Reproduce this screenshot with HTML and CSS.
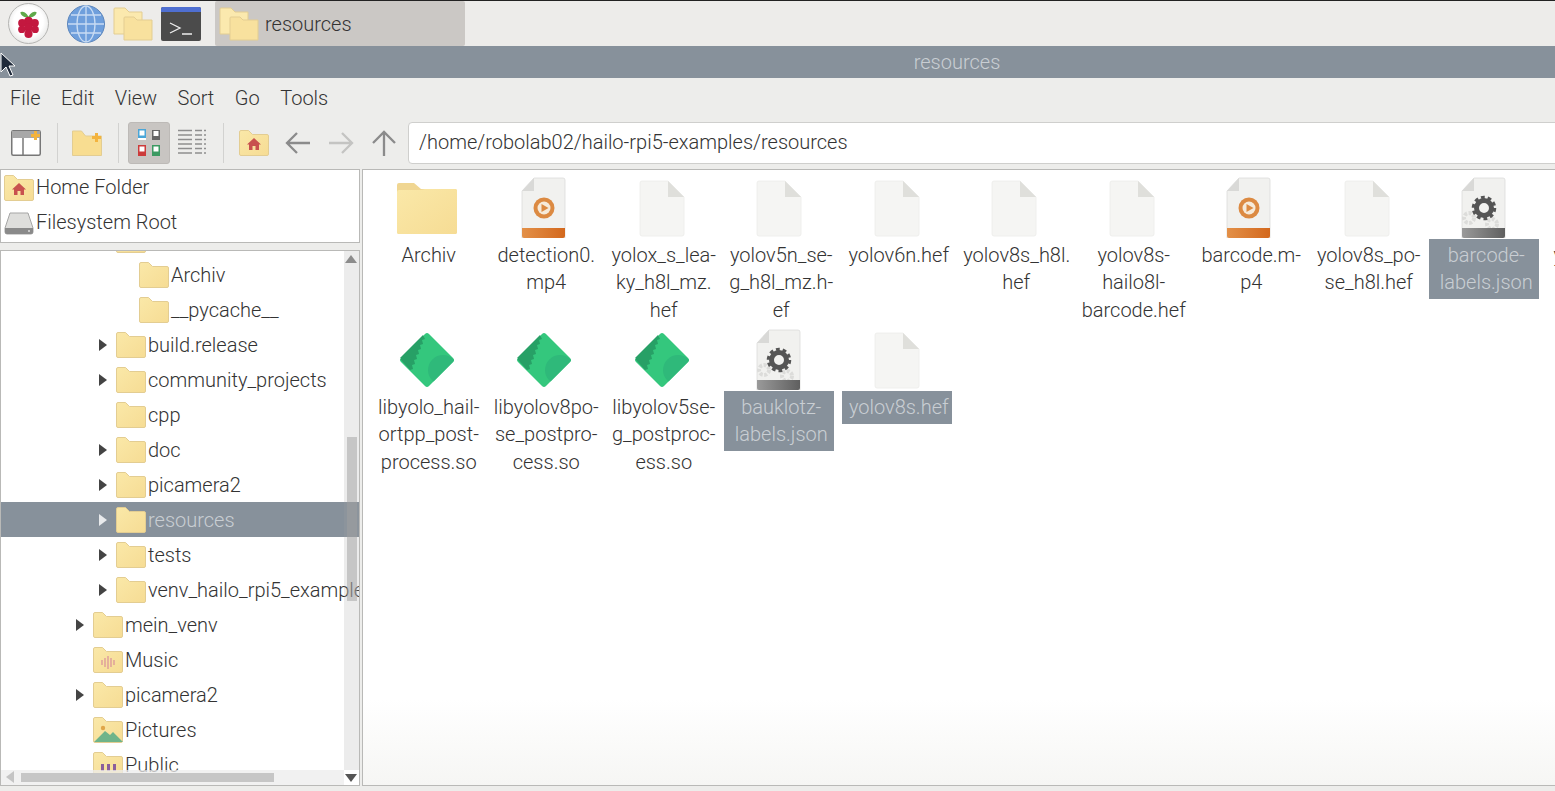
FILE: index.html
```html
<!DOCTYPE html>
<html lang="en">
<head>
<meta charset="utf-8">
<title>resources</title>
<link rel="stylesheet" href="styles.css">
</head>
<body>
<svg class="defs" width="0" height="0" aria-hidden="true">
  <defs>
    <linearGradient id="fg" x1="0" y1="0" x2="1" y2="1"><stop offset="0" stop-color="#fae8a8"/><stop offset="1" stop-color="#f6dc94"/></linearGradient>
    <linearGradient id="band" x1="0" y1="0" x2="1" y2="0"><stop offset="0" stop-color="#e39048"/><stop offset="1" stop-color="#d3681d"/></linearGradient>
    <linearGradient id="gband" x1="0" y1="0" x2="1" y2="0"><stop offset="0" stop-color="#9a9a9a"/><stop offset="1" stop-color="#5f5f5f"/></linearGradient>
    <clipPath id="dia"><path d="M28 8q2-2 4 0l24 24q2 2 0 4L32 60q-2 2-4 0L4 36q-2-2 0-4Z"/></clipPath>
    <symbol id="folder" viewBox="0 0 30 26">
      <path d="M.5 2q0-1.500 1.500-1.500h7.500l4 4H28q1.500 0 1.500 1.500V24q0 1.500-1.500 1.500H2Q.5 25.500.5 24Z" fill="url(#fg)" stroke="#e3cd92"/>
    </symbol>
    <symbol id="bigfolder" viewBox="0 0 64 64">
      <path d="M0 11q0-2 2-2h15l7 6h34q2 0 2 2v41q0 2-2 2H2q-2 0-2-2Z" fill="#f0d692"/>
      <path d="M0 18q0-2 2-2h22l4-1h30q2 0 2 2v41q0 2-2 2H2q-2 0-2-2Z" fill="url(#fg)"/>
    </symbol>
    <symbol id="blank" viewBox="0 0 64 64">
      <path d="M8 9q0-2 2-2h26l16 16v37q0 2-2 2H10q-2 0-2-2Z" fill="#f5f5f3" stroke="#ececea" stroke-width=".8"/>
      <path d="M36 7l16 16H36Z" fill="#dfdfdb"/>
    </symbol>
    <symbol id="video" viewBox="0 0 64 64">
      <path d="M8 17 20 4h29q2 0 2 2v58H8Z" fill="#f1f1ef" stroke="#dcdcda" stroke-width=".8"/>
      <path d="M8 17 20 4v13Z" fill="#d9d9d7"/>
      <path d="M8 54h43v8q0 2-2 2H10q-2 0-2-2Z" fill="url(#band)"/>
      <circle cx="30" cy="34" r="10.500" fill="#dc8a42"/>
      <circle cx="30" cy="34" r="6.500" fill="#f6ead9"/>
      <path d="M27.500 30l7 4-7 4Z" fill="#dc8a42"/>
    </symbol>
    <symbol id="gearfile" viewBox="0 0 64 64">
      <path d="M8 17 20 4h29q2 0 2 2v58H8Z" fill="#f1f1ef" stroke="#dcdcda" stroke-width=".8"/>
      <path d="M8 17 20 4v13Z" fill="#d9d9d7"/>
      <circle cx="15" cy="44" r="5" fill="none" stroke="#dcdcda" stroke-width="4" stroke-dasharray="3 1.500"/>
      <circle cx="38" cy="50" r="5" fill="none" stroke="#dcdcda" stroke-width="4" stroke-dasharray="3 1.500"/>
      <circle cx="30" cy="34" r="7.500" fill="none" stroke="#555" stroke-width="5"/>
      <circle cx="30" cy="34" r="10.500" fill="none" stroke="#555" stroke-width="3.500" stroke-dasharray="3.700 2.900"/>
      <path d="M8 54h43v8q0 2-2 2H10q-2 0-2-2Z" fill="url(#gband)"/>
    </symbol>
    <symbol id="lib" viewBox="0 0 64 64">
      <path d="M28 8q2-2 4 0l24 24q2 2 0 4L32 60q-2 2-4 0L4 36q-2-2 0-4Z" fill="#34c77d"/>
      <circle cx="46" cy="44" r="15" fill="#2fb97a" clip-path="url(#dia)"/>
      <path d="M3 32 26 9l2 4-3 1 1 4-3 1 1 4-3 1 1 4-3 1 1 4-3 1 1 4-3 1 1 4-3 1-9-10q-1-1 0-2Z" fill="#27a066"/>
    </symbol>
    <symbol id="homefolder" viewBox="0 0 30 26">
      <use href="#folder" width="30" height="26"/>
      <path d="M15 8l7 6.500h-2V20h-3.500v-4h-3v4H10v-5.500H8Z" fill="#c8514e"/>
    </symbol>
  </defs>
</svg>

<div class="screen">
  <header class="panel">
    <span class="app-pi">
      <svg width="27" height="32" viewBox="0 0 30 32"><path d="M15 8C12 2 7 2 6 3c0 3 4 6 9 6 5 0 9-3 9-6-1-1-6-1-9 5Z" fill="#5fa94a"/><circle cx="15" cy="13" r="5" fill="#c3183f"/><circle cx="8" cy="15" r="4.500" fill="#c3183f"/><circle cx="22" cy="15" r="4.500" fill="#c3183f"/><circle cx="15" cy="20" r="5" fill="#c3183f"/><circle cx="7.500" cy="22" r="4" fill="#c3183f"/><circle cx="22.500" cy="22" r="4" fill="#c3183f"/><circle cx="15" cy="27" r="4.500" fill="#c3183f"/></svg>
    </span>
    <svg class="app-globe" width="38" height="38" viewBox="0 0 38 38"><circle cx="19" cy="19" r="18.500" fill="#6f9fdc" stroke="#5b85bb"/><g fill="none" stroke="#c9dcf3" stroke-width="1.300"><ellipse cx="19" cy="19" rx="9" ry="18"/><path d="M19 1v36M1 19h36M4 10h30M4 28h30"/></g></svg>
    <svg class="app-folders" width="40" height="34" viewBox="0 0 40 34"><path d="M1 2q0-1 1-1h10l4 4h13v22H1Z" fill="#fbe9ae" stroke="#e3cd92"/><path d="M11 11q0-1 1-1h9l3 3h15v20H11Z" fill="#f8e19e" stroke="#e3cd92"/></svg>
    <svg class="app-term" width="40" height="34" viewBox="0 0 40 34"><rect width="40" height="34" rx="2" fill="#4b4b4b"/><path d="M0 2q0-2 2-2h36q2 0 2 2v3H0Z" fill="#4f6fd1"/><path d="M9 16l10 5-10 5M21 27h10" fill="none" stroke="#eee" stroke-width="1.300"/></svg>
    <div class="task">
      <svg width="40" height="34" viewBox="0 0 40 34"><path d="M1 2q0-1 1-1h10l4 4h13v22H1Z" fill="#fbe9ae" stroke="#e3cd92"/><path d="M11 11q0-1 1-1h9l3 3h15v20H11Z" fill="#f8e19e" stroke="#e3cd92"/></svg>
      <span>resources</span>
    </div>
  </header>

  <div class="titlebar">resources</div>

  <nav class="menubar">
    <span>File</span><span>Edit</span><span>View</span><span>Sort</span><span>Go</span><span>Tools</span>
  </nav>

  <div class="toolbar">
    <svg class="tb-window" width="30" height="26" viewBox="0 0 30 26"><rect x=".75" y=".75" width="28.500" height="24.500" rx="1.500" fill="#fff" stroke="#777" stroke-width="1.500"/><path d="M1 1h28v7H1Z" fill="#a8a8a8"/><path d="M12 8v17" stroke="#777" stroke-width="1.500"/><path d="M23 1h3v3h3v3h-3v3h-3V7h-3V4h3Z" fill="#f3b33e"/></svg>
    <i class="sep"></i>
    <svg class="tb-new" width="30" height="26" viewBox="0 0 30 26"><path d="M.5 1h9l4 5H29.500v19.500H.5Z" fill="#f8dd91" stroke="#e3cd92"/><path d="M23 3h3v3h3v3h-3v3h-3V9h-3V6h3Z" fill="#f3b33e"/></svg>
    <i class="sep"></i>
    <span class="tb-view">
      <svg width="22" height="28" viewBox="0 0 22 28"><rect width="8" height="11" fill="#fff"/><rect width="8" height="9" fill="#4aa6d8"/><rect x="1.500" y="1.500" width="5" height="5" fill="#fff"/><rect x="14" y="1" width="8" height="10" fill="#666"/><rect x="15.500" y="2" width="5" height="5" fill="#fff"/><rect y="16" width="8" height="11" fill="#cc3b3b"/><rect x="1.500" y="17.500" width="5" height="5" fill="#fff"/><rect x="14" y="16" width="8" height="11" fill="#3c9a62"/><rect x="15.500" y="17.500" width="5" height="5" fill="#fff"/></svg>
    </span>
    <svg class="tb-list" width="29" height="28" viewBox="0 0 29 28"><g fill="none" stroke="#8e8e8e" stroke-width="1.500"><path d="M0 1.500h14M0 6h14M0 10.500h14M0 15h14M0 19.500h14M0 24h14"/><path d="M17 1.500h7M17 6h7M17 10.500h7M17 15h7M17 19.500h7M17 24h7"/><path d="M26 1.500h3M26 6h3M26 10.500h3M26 15h3M26 19.500h3M26 24h3" stroke-dasharray="2 1"/></g></svg>
    <i class="sep"></i>
    <svg class="tb-home" width="30" height="26" viewBox="0 0 30 26"><use href="#homefolder" width="30" height="26"/></svg>
    <svg class="tb-arrow" width="26" height="24" viewBox="0 0 26 24"><path d="M25 12H2M12 2 2 12l10 10" fill="none" stroke="#8b8b8b" stroke-width="2.300"/></svg>
    <svg class="tb-arrow" width="26" height="24" viewBox="0 0 26 24"><path d="M1 12h23M14 2l10 10-10 10" fill="none" stroke="#c4c4c2" stroke-width="2.300"/></svg>
    <svg class="tb-arrow" width="26" height="26" viewBox="0 0 26 26"><path d="M13 26V2M2 13 13 2l11 11" fill="none" stroke="#8b8b8b" stroke-width="2.300"/></svg>
    <div class="pathbox">/home/robolab02/hailo-rpi5-examples/resources</div>
  </div>

  <main class="main">
    <aside class="side">
      <section class="places">
        <div class="place"><svg width="30" height="26"><use href="#homefolder" width="30" height="26"/></svg><span>Home Folder</span></div>
        <div class="place"><svg width="30" height="26" viewBox="0 0 30 26"><path d="M6 3h18l5 15v4q0 2-2 2H3q-2 0-2-2v-4Z" fill="#dededc" stroke="#a5a5a5"/><path d="M1 18h28v4q0 2-2 2H3q-2 0-2-2Z" fill="#8a8a8a"/><circle cx="25" cy="21" r="1" fill="#ddd"/></svg><span>Filesystem Root</span></div>
      </section>

      <section class="tree">
        <div class="tree-list">
          <div class="node d1"><i class="arrow none"></i><svg width="30" height="26"><use href="#folder" width="30" height="26"/></svg><span></span></div>
          <div class="node d2"><i class="arrow none"></i><svg width="30" height="26"><use href="#folder" width="30" height="26"/></svg><span>Archiv</span></div>
          <div class="node d2"><i class="arrow none"></i><svg width="30" height="26"><use href="#folder" width="30" height="26"/></svg><span>__pycache__</span></div>
          <div class="node d1"><i class="arrow"></i><svg width="30" height="26"><use href="#folder" width="30" height="26"/></svg><span>build.release</span></div>
          <div class="node d1"><i class="arrow"></i><svg width="30" height="26"><use href="#folder" width="30" height="26"/></svg><span>community_projects</span></div>
          <div class="node d1"><i class="arrow none"></i><svg width="30" height="26"><use href="#folder" width="30" height="26"/></svg><span>cpp</span></div>
          <div class="node d1"><i class="arrow"></i><svg width="30" height="26"><use href="#folder" width="30" height="26"/></svg><span>doc</span></div>
          <div class="node d1"><i class="arrow"></i><svg width="30" height="26"><use href="#folder" width="30" height="26"/></svg><span>picamera2</span></div>
          <div class="node d1 sel"><i class="arrow"></i><svg width="30" height="26"><use href="#folder" width="30" height="26"/></svg><span>resources</span></div>
          <div class="node d1"><i class="arrow"></i><svg width="30" height="26"><use href="#folder" width="30" height="26"/></svg><span>tests</span></div>
          <div class="node d1"><i class="arrow"></i><svg width="30" height="26"><use href="#folder" width="30" height="26"/></svg><span>venv_hailo_rpi5_examples</span></div>
          <div class="node d0"><i class="arrow"></i><svg width="30" height="26"><use href="#folder" width="30" height="26"/></svg><span>mein_venv</span></div>
          <div class="node d0"><i class="arrow none"></i><svg width="30" height="26" viewBox="0 0 30 26"><use href="#folder" width="30" height="26"/><path d="M9 13v5M12 11v9M15 9v13M18 11v9M21 13v5" stroke="#d98f9b" stroke-width="1.200"/></svg><span>Music</span></div>
          <div class="node d0"><i class="arrow"></i><svg width="30" height="26"><use href="#folder" width="30" height="26"/></svg><span>picamera2</span></div>
          <div class="node d0"><i class="arrow none"></i><svg width="30" height="26" viewBox="0 0 30 26"><use href="#folder" width="30" height="26"/><circle cx="10" cy="11" r="2.200" fill="#e0a64a"/><path d="M1 25 12 14l5 4 3-3 10 10Z" fill="#6fb48a"/></svg><span>Pictures</span></div>
          <div class="node d0"><i class="arrow none"></i><svg width="30" height="26" viewBox="0 0 30 26"><use href="#folder" width="30" height="26"/><path d="M8 12h3v7H8ZM14 12h3v7h-3ZM20 12h3v7h-3Z" fill="#8b5f9c"/></svg><span>Public</span></div>
        </div>
        <div class="vscroll">
          <i class="tri up"></i>
          <i class="vthumb"></i>
          <i class="tri down"></i>
        </div>
        <div class="hscroll">
          <i class="tri left"></i>
          <i class="hthumb"></i>
        </div>
      </section>
    </aside>

    <section class="files">
      <div class="grid">
        <div class="item"><svg class="ic" width="64" height="64"><use href="#bigfolder"/></svg><div class="lbl">Archiv</div></div>
        <div class="item"><svg class="ic" width="64" height="64"><use href="#video"/></svg><div class="lbl">detection0.<br>mp4</div></div>
        <div class="item"><svg class="ic" width="64" height="64"><use href="#blank"/></svg><div class="lbl">yolox_s_lea-<br>ky_h8l_mz.<br>hef</div></div>
        <div class="item"><svg class="ic" width="64" height="64"><use href="#blank"/></svg><div class="lbl">yolov5n_se-<br>g_h8l_mz.h-<br>ef</div></div>
        <div class="item"><svg class="ic" width="64" height="64"><use href="#blank"/></svg><div class="lbl">yolov6n.hef</div></div>
        <div class="item"><svg class="ic" width="64" height="64"><use href="#blank"/></svg><div class="lbl">yolov8s_h8l.<br>hef</div></div>
        <div class="item"><svg class="ic" width="64" height="64"><use href="#blank"/></svg><div class="lbl">yolov8s-<br>hailo8l-<br>barcode.hef</div></div>
        <div class="item"><svg class="ic" width="64" height="64"><use href="#video"/></svg><div class="lbl">barcode.m-<br>p4</div></div>
        <div class="item"><svg class="ic" width="64" height="64"><use href="#blank"/></svg><div class="lbl">yolov8s_po-<br>se_h8l.hef</div></div>
        <div class="item"><svg class="ic" width="64" height="64"><use href="#gearfile"/></svg><div class="lbl on">barcode-<br>labels.json</div></div>
        <div class="item"><svg class="ic" width="64" height="64"><use href="#blank"/></svg><div class="lbl">yolov6n.hef</div></div>
        <div class="item"><svg class="ic" width="64" height="64"><use href="#lib"/></svg><div class="lbl">libyolo_hail-<br>ortpp_post-<br>process.so</div></div>
        <div class="item"><svg class="ic" width="64" height="64"><use href="#lib"/></svg><div class="lbl">libyolov8po-<br>se_postpro-<br>cess.so</div></div>
        <div class="item"><svg class="ic" width="64" height="64"><use href="#lib"/></svg><div class="lbl">libyolov5se-<br>g_postproc-<br>ess.so</div></div>
        <div class="item"><svg class="ic" width="64" height="64"><use href="#gearfile"/></svg><div class="lbl on">bauklotz-<br>labels.json</div></div>
        <div class="item"><svg class="ic" width="64" height="64"><use href="#blank"/></svg><div class="lbl on">yolov8s.hef</div></div>
      </div>
    </section>
  </main>

  <svg class="cursor" width="16" height="26" viewBox="0 0 16 26"><path d="M1 1v19l5-5 4 9 3-1-4-9h6Z" fill="#1f2a3a" stroke="#fff"/></svg>
</div>
</body>
</html>
```

FILE: styles.css
```css
* { box-sizing: border-box; }
html, body { margin: 0; height: 100%; overflow: hidden; }
body {
  font-family: Roboto, "Liberation Sans", sans-serif;
  font-size: 20px;
  font-weight: 300;
  color: #333;
  background: #ededeb;
}
.defs { position: absolute; }
.screen { position: relative; width: 1555px; height: 791px; overflow: hidden; display: flex; flex-direction: column; }

.panel {
  height: 46px; flex: none; display: flex; align-items: center;
  background: #edecea; border-top: 1px solid #222;
}
.app-pi {
  width: 41px; height: 41px; margin-left: 8px; border-radius: 50%;
  border: 1px solid #b5b5b3; display: flex; align-items: center; justify-content: center;
  background: radial-gradient(circle at 50% 45%, #fff 50%, #d2d2d0 100%);
}
.app-globe { margin-left: 18px; }
.app-folders { margin-left: 8px; }
.app-term { margin-left: 8px; }
.task {
  margin-left: 14px; width: 250px; height: 45px; display: flex; align-items: center; gap: 6px;
  padding-left: 4px; background: #cbc8c5; border-radius: 2px; align-self: flex-start;
}

.titlebar {
  height: 32px; flex: none; width: 1914px; line-height: 32px; text-align: center;
  background: #87919b; color: #c9ced3;
}
.menubar {
  height: 39px; margin-bottom: 1px; flex: none; display: flex; align-items: center; gap: 20.500px; padding-left: 10px;
}
.toolbar {
  height: 50px; flex: none; display: flex; align-items: center; padding-left: 11px;
}
.sep { width: 1px; height: 40px; background: #d2d2d0; }
.tb-window { margin-right: 16px; }
.tb-new { margin: 0 16px 0 14px; }
.tb-view {
  width: 42px; height: 42px; margin-left: 9px; display: flex; align-items: center; justify-content: center;
  background: #c8c5c2; border-radius: 3px; border: 1px solid #bdbab7;
}
.tb-list { margin: 0 16px 0 8px; }
.tb-home { margin: 0 16px 0 15px; }
.tb-arrow { margin-right: 17px; }
.pathbox {
  flex: 1; height: 42px; margin-left: -6px; margin-right: -4px; line-height: 38px; padding-left: 10px;
  background: #fff; border: 1px solid #cfcfcd; border-radius: 4px;
}

.main { flex: 1; min-height: 0; display: flex; gap: 2px; padding-bottom: 5px; padding-top: 1px; }
.side { width: 360px; flex: none; display: flex; flex-direction: column; gap: 7px; }
.places { height: 74px; flex: none; background: #fff; border: 1px solid #b9b9b7; }
.place { height: 35px; display: flex; align-items: center; gap: 2px; padding-left: 3px; }
.place span { line-height: 35px; }

.tree { position: relative; flex: 1; min-height: 0; overflow: hidden; background: #fff; border: 1px solid #b9b9b7; }
.tree-list { margin-top: -29px; }
.node { height: 35px; display: flex; align-items: center; white-space: nowrap; overflow: hidden; }
.node svg { flex: none; margin-right: 2px; }
.node.d0 { padding-left: 75px; }
.node.d1 { padding-left: 98px; }
.node.d2 { padding-left: 121px; }
.node.d2 .arrow { visibility: hidden; }
.arrow {
  width: 0; height: 0; flex: none; margin-right: 9px;
  border-left: 8px solid #444; border-top: 6px solid transparent; border-bottom: 6px solid transparent;
}
.arrow.none { visibility: hidden; }
.node.sel { background: #87919b; color: #c9ced3; }
.node.sel .arrow { border-left-color: #e8eaec; }

.vscroll {
  position: absolute; right: 0; top: 0; bottom: 15px; width: 15px;
  background: rgba(160, 160, 160, .2);
}
.vthumb {
  position: absolute; left: 3px; width: 10px; top: 186px; height: 164px;
  background: rgba(160, 160, 160, .5);
}
.tri { position: absolute; width: 0; height: 0; }
.tri.up { left: 1px; top: 4px; border: 6px solid transparent; border-top: 0; border-bottom: 8px solid #8c8c8c; }
.tri.down { left: 1px; bottom: -12px; border: 6px solid transparent; border-bottom: 0; border-top: 8px solid #555; }
.hscroll {
  position: absolute; left: 0; right: 15px; bottom: 0; height: 15px;
  background: rgba(236, 236, 236, .75);
}
.hthumb { position: absolute; left: 20px; width: 253px; top: 3px; height: 9px; background: #c6c6c6; }
.tri.left { left: 5px; top: 1px; border: 6px solid transparent; border-left: 0; border-right: 8px solid #c4c4c4; }

.files {
  flex: 1; min-width: 0; overflow: hidden; padding: 1px 0 0 7px;
  background: linear-gradient(#fff 86%, #f6f6f4);
  border: 1px solid #b9b9b7; border-right: 0;
}
.grid { display: grid; grid-template-columns: repeat(11, 117.500px); grid-auto-rows: 152px; width: 1300px; }
.item { display: flex; flex-direction: column; align-items: center; }
.ic { flex: none; margin-top: 3px; }
.lbl {
  width: 110px; padding: 2.500px 0 2.500px 4px; margin: 1px 4px 0 0; text-align: center; line-height: 27.500px;
  white-space: nowrap;
}
.lbl.on { background: #87919b; color: #c9ced3; }

.cursor { position: absolute; left: 0; top: 52px; }
```
